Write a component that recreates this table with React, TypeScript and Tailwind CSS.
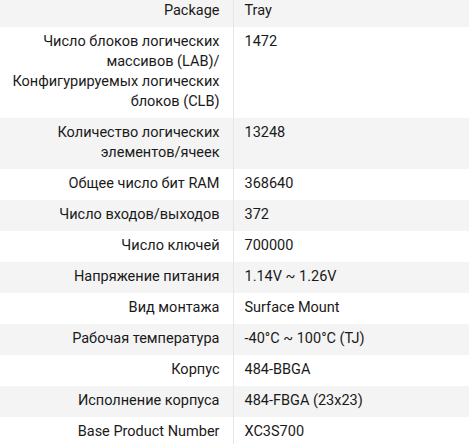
const rows: { label: React.ReactNode; value: string }[] = [
  { label: 'Package', value: 'Tray' },
  {
    label: (
      <>
        Число блоков логических
        <br />
        массивов (LAB)/
        <br />
        Конфигурируемых логических
        <br />
        блоков (CLB)
      </>
    ),
    value: '1472',
  },
  {
    label: (
      <>
        Количество логических
        <br />
        элементов/ячеек
      </>
    ),
    value: '13248',
  },
  { label: 'Общее число бит RAM', value: '368640' },
  { label: 'Число входов/выходов', value: '372' },
  { label: 'Число ключей', value: '700000' },
  { label: 'Напряжение питания', value: '1.14V ~ 1.26V' },
  { label: 'Вид монтажа', value: 'Surface Mount' },
  { label: 'Рабочая температура', value: '-40°C ~ 100°C (TJ)' },
  { label: 'Корпус', value: '484-BBGA' },
  { label: 'Исполнение корпуса', value: '484-FBGA (23x23)' },
  { label: 'Base Product Number', value: 'XC3S700' },
];

export default function App() {
  return (
    <div className="h-[444px] w-[469px] overflow-hidden bg-white font-['Roboto',sans-serif] text-[14.5px] leading-[20px] text-[#1a1a1a]">
      <table className="-mt-1 w-full table-fixed border-collapse">
        <tbody>
          {rows.map((row, i) => (
            <tr key={i} className={i % 2 === 0 ? 'bg-[#f4f4f4]' : 'bg-white'}>
              <td className="w-[233px] whitespace-nowrap border-r border-[#e6e6e6] pt-[5px] pb-[6px] pl-3 pr-[13px] text-right align-top">
                {row.label}
              </td>
              <td className="pt-[5px] pb-[6px] pl-[11px] pr-3 text-left align-top">{row.value}</td>
            </tr>
          ))}
        </tbody>
      </table>
    </div>
  );
}
